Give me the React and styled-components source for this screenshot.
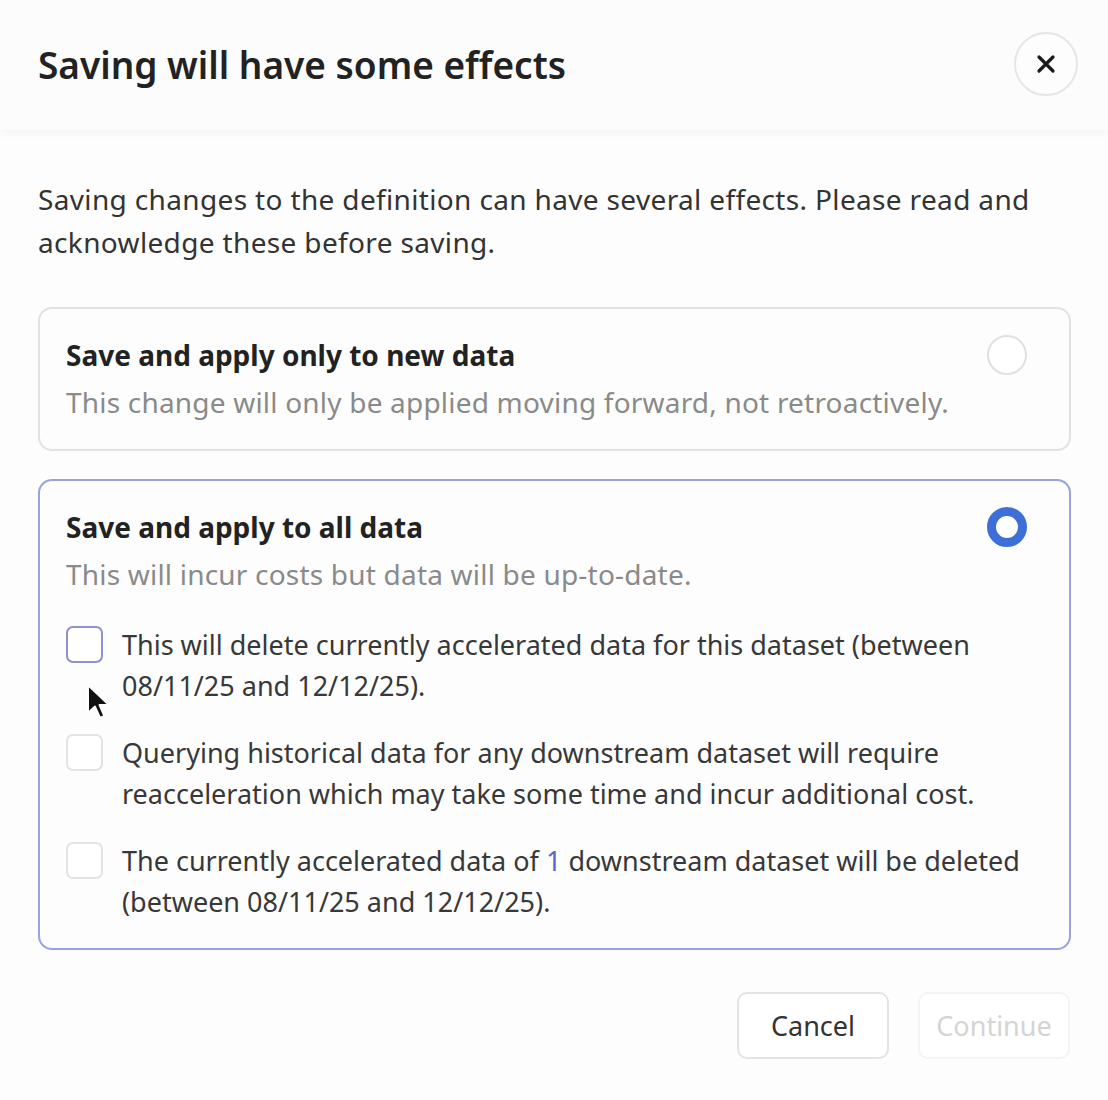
import React, { useState } from "react";
import styled, { createGlobalStyle } from "styled-components";

const GlobalStyle = createGlobalStyle`
	html, body {
		margin: 0;
		padding: 0;
		background: #fdfdfd;
	}
	body {
		font-family: "Noto Sans", "Open Sans", sans-serif;
		color: #333;
	}
	* {
		box-sizing: border-box;
	}
`;

const getChecks = () => [
	{
		id: "delete",
		text: "This will delete currently accelerated data for this dataset (between 08/11/25 and 12/12/25).",
	},
	{
		id: "requery",
		text: "Querying historical data for any downstream dataset will require reacceleration which may take some time and incur additional cost.",
	},
	{
		id: "downstream",
		text: (
			<>
				The currently accelerated data of <Link>1</Link> downstream dataset will be deleted (between 08/11/25 and 12/12/25).
			</>
		),
	},
];

const App = () => {
	const [mode, setMode] = useState("all");
	const [checked, setChecked] = useState({});
	const checks = getChecks();

	const toggle = (id) => setChecked((c) => ({ ...c, [id]: !c[id] }));

	return (
		<>
			<GlobalStyle />
			<Dialog>
				<Header>
					<Title>Saving will have some effects</Title>
					<CloseButton aria-label="Close">
						<svg width="24" height="24" viewBox="0 0 24 24" fill="none">
							<path d="M5 5L19 19M19 5L5 19" stroke="#1a1a1a" strokeWidth="3.2" strokeLinecap="round" />
						</svg>
					</CloseButton>
				</Header>
				<Body>
					<Intro>
						Saving changes to the definition can have several effects. Please read and acknowledge these before saving.
					</Intro>
					<Options>
						<Card $active={mode === "new"} onClick={() => setMode("new")}>
							<CardHead>
								<CardText>
									<CardTitle>Save and apply only to new data</CardTitle>
									<CardSub>This change will only be applied moving forward, not retroactively.</CardSub>
								</CardText>
								<Radio $on={mode === "new"} />
							</CardHead>
						</Card>
						<Card $active={mode === "all"} onClick={() => setMode("all")}>
							<CardHead>
								<CardText>
									<CardTitle>Save and apply to all data</CardTitle>
									<CardSub>This will incur costs but data will be up-to-date.</CardSub>
								</CardText>
								<Radio $on={mode === "all"} />
							</CardHead>
							{mode === "all" && (
								<CheckList>
									{checks.map((c, i) => (
										<CheckRow key={c.id} onClick={(e) => { e.stopPropagation(); toggle(c.id); }}>
											<Box $focus={i === 0} $on={!!checked[c.id]} />
											<CheckText>{c.text}</CheckText>
										</CheckRow>
									))}
								</CheckList>
							)}
						</Card>
					</Options>
				</Body>
				<Footer>
					<Button>Cancel</Button>
					<Button $disabled disabled>Continue</Button>
				</Footer>
				<Cursor width="26" height="38" viewBox="0 0 13 19">
					<path d="M1 1 L1 15 L4.5 11.8 L7 17.5 L9.2 16.5 L6.8 11 L11.5 11 Z" fill="#111" stroke="#fff" strokeWidth="1" strokeLinejoin="round" />
				</Cursor>
			</Dialog>
		</>
	);
};

export default App;

const Link = styled.span`
	color: #5a63c9;
`;

const Dialog = styled.div`
	position: relative;
	width: 1108px;
	height: 1100px;
	background: #fdfdfd;
	overflow: hidden;
`;

const Header = styled.div`
	height: 130px;
	display: flex;
	align-items: center;
	justify-content: space-between;
	padding: 0 30px 2px 38px;
	background: #fcfcfc;
	box-shadow: 0 4px 8px rgba(0, 0, 0, 0.035);
	position: relative;
	z-index: 1;
`;

const Title = styled.h1`
	margin: 0;
	font-size: 37px;
	font-weight: 600;
	color: #222;
	letter-spacing: 0px;
`;

const CloseButton = styled.button`
	width: 64px;
	height: 64px;
	border-radius: 50%;
	border: 2px solid #e6e6e6;
	background: #fdfdfd;
	display: flex;
	align-items: center;
	justify-content: center;
	cursor: pointer;
	padding: 0;
`;

const Body = styled.div`
	padding: 48px 37px 0 38px;
`;

const Intro = styled.p`
	margin: 0;
	font-size: 28px;
	line-height: 43px;
	letter-spacing: 0.35px;
	color: #333;
`;

const Options = styled.div`
	margin-top: 43px;
	display: flex;
	flex-direction: column;
	gap: 28px;
`;

const Card = styled.div`
	border: 2px solid ${(p) => (p.$active ? "#9aa3e0" : "#e2e2e2")};
	border-radius: 14px;
	padding: 24px 26px 22px 26px;
	background: #fdfdfd;
	cursor: pointer;
`;

const CardHead = styled.div`
	display: flex;
	align-items: flex-start;
	justify-content: space-between;
`;

const CardText = styled.div`
	display: flex;
	flex-direction: column;
`;

const CardTitle = styled.div`
	font-size: 28px;
	font-weight: 700;
	line-height: 44px;
	color: #222;
`;

const CardSub = styled.div`
	font-size: 28px;
	line-height: 50px;
	letter-spacing: 0.2px;
	color: #8a8a8a;
`;

const Radio = styled.span`
	flex: none;
	width: 40px;
	height: 40px;
	margin: 2px 16px 0 0;
	border-radius: 50%;
	border: ${(p) => (p.$on ? "9px solid #3e6fd6" : "2px solid #e0e0e0")};
	background: #fff;
`;

const CheckList = styled.div`
	margin-top: 25px;
	padding-bottom: 4px;
	display: flex;
	flex-direction: column;
	gap: 26px;
`;

const CheckRow = styled.label`
	display: flex;
	align-items: flex-start;
	gap: 19px;
	cursor: pointer;
`;

const Box = styled.span`
	flex: none;
	width: 37px;
	height: 37px;
	margin-top: 2px;
	border-radius: 7px;
	border: 2px solid ${(p) => (p.$focus ? "#8e90d2" : "#e3e3e3")};
	background: ${(p) => (p.$on ? "#3e6fd6" : "#fff")};
`;

const CheckText = styled.span`
	font-size: 27px;
	line-height: 41px;
	color: #383838;
`;

const Footer = styled.div`
	display: flex;
	justify-content: flex-end;
	gap: 29px;
	padding: 42px 38px 0 0;
`;

const Button = styled.button`
	width: 152px;
	height: 67px;
	border-radius: 10px;
	border: 2px solid ${(p) => (p.$disabled ? "#f4f4f4" : "#e3e3e3")};
	background: #fff;
	font-family: inherit;
	font-size: 27px;
	color: ${(p) => (p.$disabled ? "#d4d4d4" : "#333")};
	cursor: ${(p) => (p.$disabled ? "default" : "pointer")};
`;

const Cursor = styled.svg`
	position: absolute;
	left: 86px;
	top: 683px;
	pointer-events: none;
`;
